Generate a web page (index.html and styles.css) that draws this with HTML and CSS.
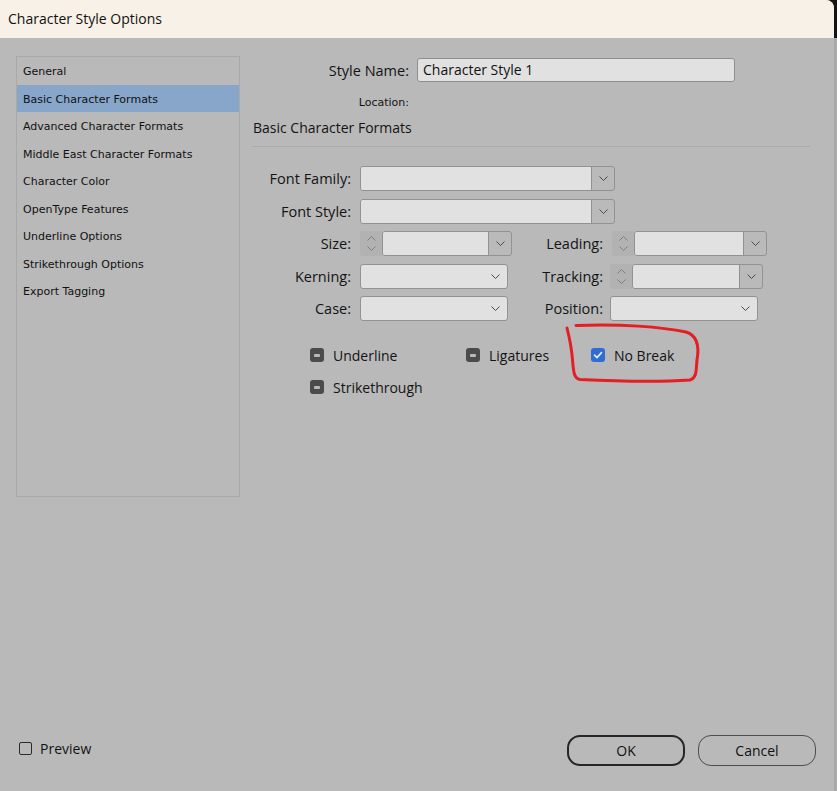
FILE: index.html
```html
<!DOCTYPE html>
<html>
<head>
<meta charset="utf-8">
<title>Character Style Options</title>
<link rel="stylesheet" href="styles.css">
</head>
<body>
<div class="dialog">
  <div class="titlebar">Character Style Options</div>
  <div class="body">
    <div class="main">
      <ul class="sidebar">
        <li>General</li>
        <li class="active">Basic Character Formats</li>
        <li>Advanced Character Formats</li>
        <li>Middle East Character Formats</li>
        <li>Character Color</li>
        <li>OpenType Features</li>
        <li>Underline Options</li>
        <li>Strikethrough Options</li>
        <li>Export Tagging</li>
      </ul>
      <div class="panel">
        <div class="name-row">
          <label class="name-label">Style Name:</label>
          <div class="text-input">Character Style 1</div>
        </div>
        <div class="loc-row"><span class="loc-label">Location:</span></div>
        <div class="heading">Basic Character Formats</div>
        <div class="sep"></div>

        <div class="form">
          <label class="lbl1">Font Family:</label>
          <div class="combo wide">
            <div class="field"></div>
            <div class="btn"><svg class="chev" viewBox="0 0 9 5"><polyline points="0.5,0.5 4.5,4.5 8.5,0.5"/></svg></div>
          </div>

          <label class="lbl1">Font Style:</label>
          <div class="combo wide">
            <div class="field"></div>
            <div class="btn"><svg class="chev" viewBox="0 0 9 5"><polyline points="0.5,0.5 4.5,4.5 8.5,0.5"/></svg></div>
          </div>

          <label class="lbl1">Size:</label>
          <div class="spinbox">
            <div class="spin">
              <svg class="arr" viewBox="0 0 9 5"><polyline points="0.5,4.5 4.5,0.5 8.5,4.5"/></svg>
              <svg class="arr" viewBox="0 0 9 5"><polyline points="0.5,0.5 4.5,4.5 8.5,0.5"/></svg>
            </div>
            <div class="combo grow">
              <div class="field"></div>
              <div class="btn"><svg class="chev" viewBox="0 0 9 5"><polyline points="0.5,0.5 4.5,4.5 8.5,0.5"/></svg></div>
            </div>
          </div>
          <label class="lbl2">Leading:</label>
          <div class="spinbox lead">
            <div class="spin">
              <svg class="arr" viewBox="0 0 9 5"><polyline points="0.5,4.5 4.5,0.5 8.5,4.5"/></svg>
              <svg class="arr" viewBox="0 0 9 5"><polyline points="0.5,0.5 4.5,4.5 8.5,0.5"/></svg>
            </div>
            <div class="combo grow">
              <div class="field"></div>
              <div class="btn"><svg class="chev" viewBox="0 0 9 5"><polyline points="0.5,0.5 4.5,4.5 8.5,0.5"/></svg></div>
            </div>
          </div>

          <label class="lbl1">Kerning:</label>
          <div class="dropdown"><svg class="chev" viewBox="0 0 9 5"><polyline points="0.5,0.5 4.5,4.5 8.5,0.5"/></svg></div>
          <label class="lbl2">Tracking:</label>
          <div class="spinbox track">
            <div class="spin">
              <svg class="arr" viewBox="0 0 9 5"><polyline points="0.5,4.5 4.5,0.5 8.5,4.5"/></svg>
              <svg class="arr" viewBox="0 0 9 5"><polyline points="0.5,0.5 4.5,4.5 8.5,0.5"/></svg>
            </div>
            <div class="combo grow">
              <div class="field"></div>
              <div class="btn"><svg class="chev" viewBox="0 0 9 5"><polyline points="0.5,0.5 4.5,4.5 8.5,0.5"/></svg></div>
            </div>
          </div>

          <label class="lbl1">Case:</label>
          <div class="dropdown"><svg class="chev" viewBox="0 0 9 5"><polyline points="0.5,0.5 4.5,4.5 8.5,0.5"/></svg></div>
          <label class="lbl2">Position:</label>
          <div class="dropdown pos"><svg class="chev" viewBox="0 0 9 5"><polyline points="0.5,0.5 4.5,4.5 8.5,0.5"/></svg></div>
        </div>

        <div class="checks">
          <div class="check"><span class="box mixed"></span><span>Underline</span></div>
          <div class="check"><span class="box mixed"></span><span>Ligatures</span></div>
          <div class="check"><span class="box on"><svg viewBox="0 0 14 14"><polyline points="3.5,7.2 6,9.6 10.5,4.6"/></svg></span><span>No Break</span></div>
          <div class="check"><span class="box mixed"></span><span>Strikethrough</span></div>
        </div>
      </div>
    </div>

    <div class="footer">
      <div class="preview"><span class="pbox"></span><span>Preview</span></div>
      <div class="buttons">
        <div class="button ok">OK</div>
        <div class="button">Cancel</div>
      </div>
    </div>
  </div>

  <svg class="scribble" viewBox="0 0 834 791" width="834" height="791">
    <path d="M576,325.5 C620,323.5 662,327 686,332 C699,336 699,349 697,360 C696,370 697,378 690,380 C660,382 612,381 580,379.5 C574,378.5 573.5,372 572.5,360 C571.5,346 569,336 567,328"/>
  </svg>
</div>
</body>
</html>
```

FILE: styles.css
```css
html, body {
  margin: 0;
  padding: 0;
}
body {
  width: 837px;
  height: 791px;
  overflow: hidden;
  background: linear-gradient(#141414 0, #141414 38px, #a9a9a9 38px);
  font-family: "Open Sans", "Liberation Sans", sans-serif;
  color: #141414;
}
.dialog {
  position: relative;
  width: 834px;
  height: 791px;
  background: #b9b9b9;
  border-top-right-radius: 8px;
  overflow: hidden;
  display: flex;
  flex-direction: column;
}
.titlebar {
  height: 38px;
  flex: none;
  box-sizing: border-box;
  background: #f8f1e7;
  padding-left: 8px;
  padding-bottom: 1px;
  display: flex;
  align-items: center;
  font-size: 14px;
  color: #111;
}
.body {
  flex: 1;
  display: flex;
  flex-direction: column;
  padding: 18px 0 0 16px;
}
.main {
  display: flex;
  height: 441px;
}
.sidebar {
  list-style: none;
  margin: 0;
  padding: 0;
  width: 224px;
  height: 441px;
  box-sizing: border-box;
  border: 1px solid #a9a9a9;
  font-family: "DejaVu Sans", sans-serif;
  font-size: 11px;
  color: #111;
  flex: none;
}
.sidebar li {
  height: 27.5px;
  line-height: 29px;
  padding-left: 6px;
}
.sidebar li.active {
  background: #87a6ca;
}
.panel {
  flex: 1;
  padding: 2px 0 0 12px;
}
.name-row {
  display: flex;
  align-items: center;
  height: 24px;
}
.name-label {
  width: 157px;
  text-align: right;
  font-size: 14.5px;
  margin-right: 8px;
}
.text-input {
  width: 318px;
  height: 24px;
  box-sizing: border-box;
  border: 1px solid #8f8f8f;
  border-radius: 3px;
  background: #e1e1e1;
  padding-left: 5px;
  font-size: 14px;
  line-height: 22px;
  color: #111;
}
.loc-row {
  margin-top: 7px;
  height: 14px;
  width: 157px;
  text-align: right;
}
.loc-label {
  font-family: "DejaVu Sans", sans-serif;
  font-size: 11px;
  line-height: 14px;
}
.heading {
  margin-top: 15px;
  height: 20px;
  line-height: 20px;
  padding-left: 1px;
  font-size: 14px;
}
.sep {
  margin-top: 8px;
  width: 558px;
  height: 1px;
  background: #aaaaaa;
}
.form {
  margin-top: 19px;
  display: grid;
  grid-template-columns: 108px 152px 99px 155px;
  grid-auto-rows: 25px;
  row-gap: 7.5px;
  align-items: center;
}
.form label {
  font-size: 14.5px;
  text-align: right;
  white-space: nowrap;
}
.lbl1 { grid-column: 1; padding-right: 9px; }
.lbl2 { grid-column: 3; padding-right: 8px; }
.combo {
  display: flex;
  height: 25px;
  box-sizing: border-box;
  border: 1px solid #929292;
  border-radius: 3px;
  background: #bababa;
  overflow: hidden;
}
.combo.wide {
  grid-column: 2 / span 2;
  width: 255px;
}
.combo .field {
  flex: 1;
  background: #e1e1e1;
  border-right: 1px solid #929292;
}
.combo .btn {
  width: 22px;
  display: flex;
  align-items: center;
  justify-content: center;
}
.chev {
  width: 9px;
  height: 5px;
  fill: none;
  stroke: #4a4a4a;
  stroke-width: 1;
}
.spinbox {
  display: flex;
  height: 25px;
  width: 152px;
}
.spinbox.lead { width: 155px; margin-left: 1px; }
.spinbox.track { width: 153px; margin-left: -1px; }
.spin {
  width: 22px;
  flex: none;
  background: #b2b2b2;
  border-radius: 3px 0 0 3px;
  display: flex;
  flex-direction: column;
  align-items: center;
  justify-content: center;
  gap: 5px;
}
.arr {
  width: 9px;
  height: 5px;
  fill: none;
  stroke: #7e7e7e;
  stroke-width: 1;
}
.combo.grow {
  flex: 1;
}
.dropdown {
  width: 148px;
  height: 25px;
  box-sizing: border-box;
  border: 1px solid #929292;
  border-radius: 3px;
  background: #e1e1e1;
  display: flex;
  align-items: center;
  justify-content: flex-end;
  padding-right: 7px;
}
.dropdown.pos {
  margin-left: -1px;
}
.checks {
  margin-top: 25px;
  margin-left: 58px;
  display: grid;
  grid-template-columns: 156px 125px 120px;
  grid-auto-rows: 18px;
  row-gap: 14px;
  font-size: 14px;
}
.check {
  display: flex;
  align-items: center;
  gap: 9px;
}
.box {
  width: 14px;
  height: 14px;
  border-radius: 3px;
  flex: none;
  display: flex;
  align-items: center;
  justify-content: center;
}
.box.mixed {
  background: #4b4b4b;
}
.box.mixed::after {
  content: "";
  width: 6px;
  height: 3px;
  background: #b9b9b9;
  border-radius: 1px;
}
.box.on {
  background: #2f6dd5;
}
.box.on svg {
  width: 14px;
  height: 14px;
  fill: none;
  stroke: #e6eefb;
  stroke-width: 1.6;
  stroke-linecap: round;
  stroke-linejoin: round;
}
.footer {
  margin-top: auto;
  margin-bottom: 25px;
  height: 31px;
  display: flex;
  align-items: center;
  justify-content: space-between;
  padding-right: 18px;
}
.preview {
  display: flex;
  align-items: center;
  gap: 8px;
  margin-left: 3px;
  margin-top: -4px;
  font-size: 14px;
}
.pbox {
  width: 13px;
  height: 13px;
  box-sizing: border-box;
  border: 1px solid #2b2b2b;
  border-radius: 2px;
}
.buttons {
  display: flex;
  gap: 13px;
}
.button {
  width: 118px;
  height: 31px;
  box-sizing: border-box;
  border: 1px solid #4d4d4d;
  border-radius: 13px;
  display: flex;
  align-items: center;
  justify-content: center;
  font-size: 14px;
  color: #111;
}
.button.ok {
  border: 2px solid #262626;
}
.scribble {
  position: absolute;
  left: 0;
  top: 0;
  pointer-events: none;
  fill: none;
  stroke: #e51d24;
  stroke-width: 3;
  stroke-linecap: round;
  stroke-linejoin: round;
}
```
